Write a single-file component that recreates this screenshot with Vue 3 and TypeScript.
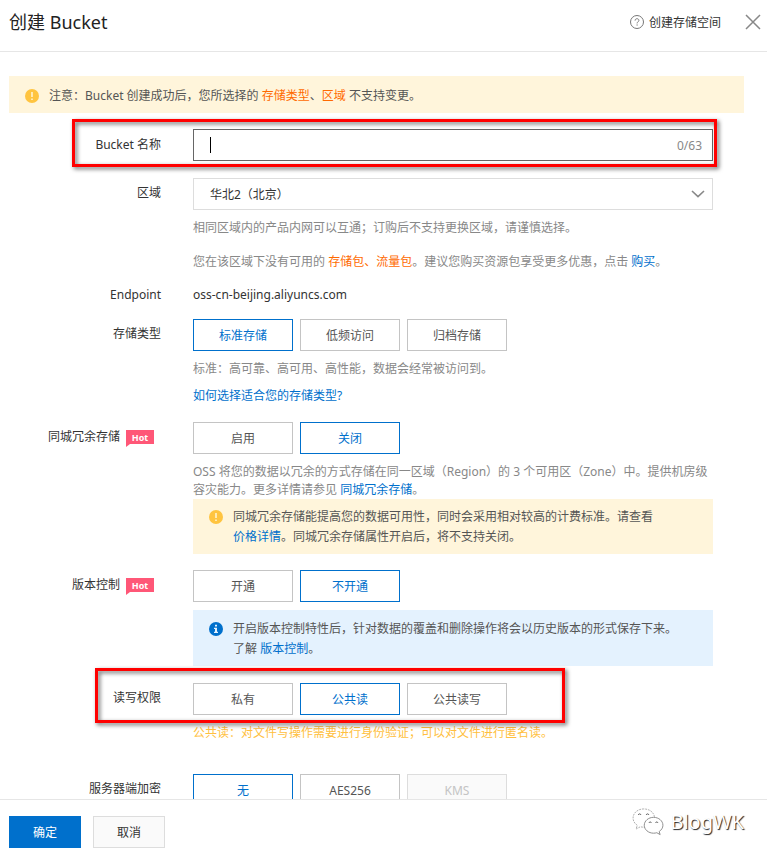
<script setup lang="ts">
import { computed, ref } from 'vue'

interface Option {
  value: string
  label: string
  disabled?: boolean
}

const MAX_NAME = 63
const bucketName = ref('')
const counter = computed(() => `${bucketName.value.length}/${MAX_NAME}`)

const region = ref('cn-beijing')
const storage = ref('standard')
const redundancy = ref('off')
const versioning = ref('off')
const acl = ref('public-read')
const encryption = ref('none')

const storageOptions: Option[] = [
  { value: 'standard', label: '标准存储' },
  { value: 'ia', label: '低频访问' },
  { value: 'archive', label: '归档存储' },
]
const redundancyOptions: Option[] = [
  { value: 'on', label: '启用' },
  { value: 'off', label: '关闭' },
]
const versioningOptions: Option[] = [
  { value: 'on', label: '开通' },
  { value: 'off', label: '不开通' },
]
const aclOptions: Option[] = [
  { value: 'private', label: '私有' },
  { value: 'public-read', label: '公共读' },
  { value: 'public-read-write', label: '公共读写' },
]
const encryptionOptions: Option[] = [
  { value: 'none', label: '无' },
  { value: 'aes256', label: 'AES256' },
  { value: 'kms', label: 'KMS', disabled: true },
]
</script>

<template>
  <div class="dialog">
    <header class="head">
      <h1>创建 Bucket</h1>
      <a class="doc" href="#">
        <svg width="14" height="14" viewBox="0 0 14 14" fill="none" stroke="#777">
          <circle cx="7" cy="7" r="6.5" />
          <path d="M5.1 5.6C5.1 4.3 6 3.7 7 3.7s1.9.7 1.9 1.7c0 1.3-1.8 1.5-1.8 3M7.1 9.4v1.2" />
        </svg>
        <span>创建存储空间</span>
      </a>
      <button class="close" type="button">
        <svg width="16" height="16" viewBox="0 0 16 16" fill="none" stroke="#888" stroke-width="1.5">
          <path d="M1 1l14 14M15 1L1 15" />
        </svg>
      </button>
    </header>

    <main class="body">
      <div class="notice top-notice">
        <svg width="14" height="14" viewBox="0 0 14 14">
          <circle cx="7" cy="7" r="7" fill="#ffc440" />
          <path d="M7 3v5M7 9.5v1.6" stroke="#fff3d0" stroke-width="1.6" />
        </svg>
        <p>注意：Bucket 创建成功后，您所选择的 <em>存储类型</em>、<em>区域</em> 不支持变更。</p>
      </div>

      <form class="form" @submit.prevent>
        <div class="row name-row">
          <label class="label" for="bucket-name">Bucket 名称</label>
          <div class="field">
            <div class="input-box">
              <span class="caret"></span>
              <input id="bucket-name" v-model="bucketName" type="text" :maxlength="MAX_NAME" />
              <span class="counter">{{ counter }}</span>
            </div>
          </div>
          <div class="mark mark-name"></div>
        </div>

        <div class="row region-row">
          <label class="label" for="region">区域</label>
          <div class="field">
            <div class="select-box">
              <select id="region" v-model="region">
                <option value="cn-beijing">华北2（北京）</option>
              </select>
              <svg width="14" height="8" viewBox="0 0 14 8" fill="none" stroke="#888" stroke-width="1.6">
                <path d="M1 1l6 5.600L13 1" />
              </svg>
            </div>
            <p class="help">相同区域内的产品内网可以互通；订购后不支持更换区域，请谨慎选择。</p>
            <p class="help spaced">您在该区域下没有可用的 <em>存储包、流量包</em>。建议您购买资源包享受更多优惠，点击 <a href="#">购买</a>。</p>
          </div>
        </div>

        <div class="row endpoint-row">
          <span class="label">Endpoint</span>
          <p class="field value">oss-cn-beijing.aliyuncs.com</p>
        </div>

        <div class="row storage-row">
          <span id="l-storage" class="label">存储类型</span>
          <div class="field">
            <div class="choices" role="group" aria-labelledby="l-storage">
              <button v-for="o in storageOptions" :key="o.value" type="button" class="choice" :class="{ on: storage === o.value }" @click="storage = o.value">{{ o.label }}</button>
            </div>
            <p class="help">标准：高可靠、高可用、高性能，数据会经常被访问到。</p>
            <p class="help"><a href="#">如何选择适合您的存储类型?</a></p>
          </div>
        </div>

        <div class="row redundancy-row">
          <span id="l-redundancy" class="label tagged">同城冗余存储<b class="hot">Hot</b></span>
          <div class="field">
            <div class="choices" role="group" aria-labelledby="l-redundancy">
              <button v-for="o in redundancyOptions" :key="o.value" type="button" class="choice" :class="{ on: redundancy === o.value }" @click="redundancy = o.value">{{ o.label }}</button>
            </div>
            <p class="help">OSS 将您的数据以冗余的方式存储在同一区域（Region）的 3 个可用区（Zone）中。提供机房级容灾能力。更多详情请参见 <a href="#">同城冗余存储</a>。</p>
            <div class="notice attached">
              <svg width="14" height="14" viewBox="0 0 14 14">
                <circle cx="7" cy="7" r="7" fill="#ffc440" />
                <path d="M7 3v5M7 9.5v1.6" stroke="#fff3d0" stroke-width="1.6" />
              </svg>
              <p>同城冗余存储能提高您的数据可用性，同时会采用相对较高的计费标准。请查看<br /><a href="#">价格详情</a>。同城冗余存储属性开启后，将不支持关闭。</p>
            </div>
          </div>
        </div>

        <div class="row version-row">
          <span id="l-version" class="label tagged">版本控制<b class="hot">Hot</b></span>
          <div class="field">
            <div class="choices" role="group" aria-labelledby="l-version">
              <button v-for="o in versioningOptions" :key="o.value" type="button" class="choice" :class="{ on: versioning === o.value }" @click="versioning = o.value">{{ o.label }}</button>
            </div>
            <div class="notice info">
              <svg width="14" height="14" viewBox="0 0 14 14">
                <circle cx="7" cy="7" r="7" fill="#0070cc" />
                <path d="M6 2.7h2v1.8H6zM5 5.8h3v4h1v1.2H5V9.8h1V7H5z" fill="#e4f2fe" />
              </svg>
              <p>开启版本控制特性后，针对数据的覆盖和删除操作将会以历史版本的形式保存下来。<br />了解 <a href="#">版本控制</a>。</p>
            </div>
          </div>
        </div>

        <div class="row acl-row">
          <span id="l-acl" class="label">读写权限</span>
          <div class="field">
            <div class="choices" role="group" aria-labelledby="l-acl">
              <button v-for="o in aclOptions" :key="o.value" type="button" class="choice" :class="{ on: acl === o.value }" @click="acl = o.value">{{ o.label }}</button>
            </div>
            <p class="help warn">公共读：对文件写操作需要进行身份验证；可以对文件进行匿名读。</p>
          </div>
          <div class="mark mark-acl"></div>
        </div>

        <div class="row">
          <span id="l-encryption" class="label">服务器端加密</span>
          <div class="field">
            <div class="choices" role="group" aria-labelledby="l-encryption">
              <button v-for="o in encryptionOptions" :key="o.value" type="button" class="choice" :class="{ on: encryption === o.value }" :disabled="o.disabled" @click="encryption = o.value">{{ o.label }}</button>
            </div>
          </div>
        </div>
      </form>
    </main>

    <footer class="foot">
      <button type="button" class="btn primary">确定</button>
      <button type="button" class="btn">取消</button>
      <div class="brand">
        <svg width="32" height="28" viewBox="0 0 34 30" fill="#fff" stroke="#888" stroke-width="1" stroke-linejoin="round">
          <path d="M12.500 1C6 1 1 5.300 1 10.700c0 3.200 1.700 6 4.500 7.800L4.200 22.500l4.600-2.400c1.200.3 2.500.5 3.700.5 6.500 0 11.500-4.400 11.500-9.900S19 1 12.500 1z" stroke="#aaa" stroke-dasharray="2 1" />
          <path d="M23 10c-5.500 0-10 3.800-10 8.500S17.500 27 23 27c1.200 0 2.300-.2 3.400-.5l3.600 2-1-3.300c2.400-1.600 4-4 4-6.700C33 13.800 28.500 10 23 10z" />
          <path d="M6.500 7.500c.5-1.600 2.500-1.600 3 0M15 7.500c.5-1.600 2.500-1.600 3 0M18 16c.5-1.400 2.200-1.400 2.700 0M25 16c.5-1.400 2.200-1.400 2.700 0" fill="none" stroke="#555" />
        </svg>
        <span>BlogWK</span>
      </div>
    </footer>
  </div>
</template>

<style>
body {
  margin: 0;
  background: #fff;
}
</style>

<style scoped>
.dialog {
  display: flex;
  flex-direction: column;
  height: 100vh;
  color: #333;
  font: 12px/18px "Noto Sans", "Noto Sans CJK SC", sans-serif;
}
.dialog * {
  box-sizing: border-box;
}
p,
h1 {
  margin: 0;
}
button,
input,
select {
  margin: 0;
  font: inherit;
  color: inherit;
}
a {
  color: #0070cc;
  text-decoration: none;
}
em {
  color: #ff6a00;
  font-style: normal;
}
svg {
  display: block;
  flex: none;
}

.head {
  display: flex;
  flex: none;
  align-items: center;
  height: 52px;
  padding: 0 6px 8px 9px;
  border-bottom: 1px solid #e6e6e6;
}
.head h1 {
  flex: 1;
  font-size: 18px;
  font-weight: 400;
  line-height: 24px;
  color: #222;
}
.doc {
  display: flex;
  align-items: center;
  gap: 5px;
  color: #333;
}
.doc span {
  padding-top: 2px;
}
.close {
  margin-left: 24px;
  padding: 0;
  border: 0;
  background: none;
}

.body {
  flex: 1;
  min-height: 0;
  padding: 24px 23px 0 9px;
  overflow-y: auto;
  scrollbar-width: none;
}
.notice {
  display: flex;
  gap: 10px;
  padding: 9px 16px 7px;
  background: #fff5db;
  color: #555;
  line-height: 20px;
}
.notice svg {
  margin-top: 3px;
}
.notice.attached {
  padding-top: 8px;
}
.notice.info {
  margin-top: 8px;
  background: #e4f2fe;
}
.notice.top-notice {
  padding-top: 10px;
}

.form {
  margin-top: 16px;
}
.row {
  position: relative;
  display: grid;
  grid-template-columns: 152px minmax(0, 520px);
  column-gap: 32px;
}
.name-row {
  margin-bottom: 17px;
}
.region-row {
  margin-bottom: 15px;
}
.redundancy-row {
  margin-bottom: 16px;
}
.endpoint-row {
  margin-bottom: 15px;
}
.storage-row {
  margin-bottom: 17px;
}
.version-row {
  margin-bottom: 17px;
}
.acl-row {
  margin-bottom: 32px;
}
.label {
  line-height: 30px;
  text-align: right;
}
.name-row .label {
  line-height: 32px;
}
.endpoint-row .label {
  line-height: 18px;
}
.tagged {
  display: flex;
  align-items: center;
  justify-content: flex-end;
  gap: 6px;
  height: 30px;
  padding-right: 7px;
}
.hot {
  position: relative;
  width: 28px;
  height: 14px;
  background: #ff5777;
  color: #fff;
  font-size: 9px;
  line-height: 15px;
  text-align: center;
}
.hot::after {
  content: "";
  position: absolute;
  top: 14px;
  left: 0;
  border-top: 3px solid #ff5777;
  border-right: 4px solid transparent;
}

.input-box,
.select-box {
  display: flex;
  align-items: center;
  height: 32px;
  border: 1px solid #ddd;
}
.input-box {
  padding: 0 10px 0 16px;
  border-color: #666;
}
.input-box input {
  flex: 1;
  min-width: 0;
  padding: 0;
  border: 0;
  outline: 0;
  background: none;
}
.caret {
  width: 1px;
  height: 16px;
  background: #000;
}
.counter {
  padding-top: 2px;
  color: #888;
}
.select-box {
  display: grid;
  grid-template-columns: 1fr 21px;
}
.select-box select {
  grid-area: 1 / 1 / 2 / 3;
  height: 30px;
  padding: 2px 24px 0 16px;
  border: 0;
  outline: 0;
  background: none;
  appearance: none;
}
.select-box svg {
  grid-area: 1 / 2;
  pointer-events: none;
}

.help {
  margin-top: 9px;
  color: #888;
}
.help.spaced {
  margin-top: 16px;
}
.help.warn {
  color: #ffbf40;
}
.choices {
  display: flex;
  gap: 7px;
}
.choice {
  width: 100px;
  height: 32px;
  padding: 2px 0 0;
  border: 1px solid #c4c4c4;
  background: #fff;
  color: #555;
}
.choice.on {
  border-color: #0070cc;
  color: #0070cc;
}
.choice:disabled {
  border-color: #ddd;
  background: #fafafa;
  color: #c4c4c4;
}

/* Highlight frames laid over the fields */
.mark {
  position: absolute;
  border: 3px solid #f00;
  filter: drop-shadow(2px 2px 2px rgba(0, 0, 0, 0.6));
  pointer-events: none;
}
.mark-name {
  top: -10px;
  left: 63px;
  width: 645px;
  height: 48px;
}
.mark-acl {
  top: -15px;
  left: 86px;
  width: 470px;
  height: 55px;
}

.foot {
  display: flex;
  flex: none;
  align-items: flex-start;
  gap: 12px;
  padding: 16px 23px 9px 9px;
  border-top: 1px solid #e6e6e6;
  background: #fff;
}
.btn {
  width: 72px;
  height: 32px;
  padding: 2px 0 0;
  border: 1px solid #ddd;
  background: #fafafa;
}
.btn.primary {
  border-color: #0070cc;
  background: #0070cc;
  color: #fff;
}
.brand {
  display: flex;
  align-items: center;
  gap: 6px;
  margin: -8px 0 0 auto;
  color: #fff;
  font-size: 20px;
  line-height: 28px;
  text-shadow: 1px 1px 1px #222;
}
</style>
